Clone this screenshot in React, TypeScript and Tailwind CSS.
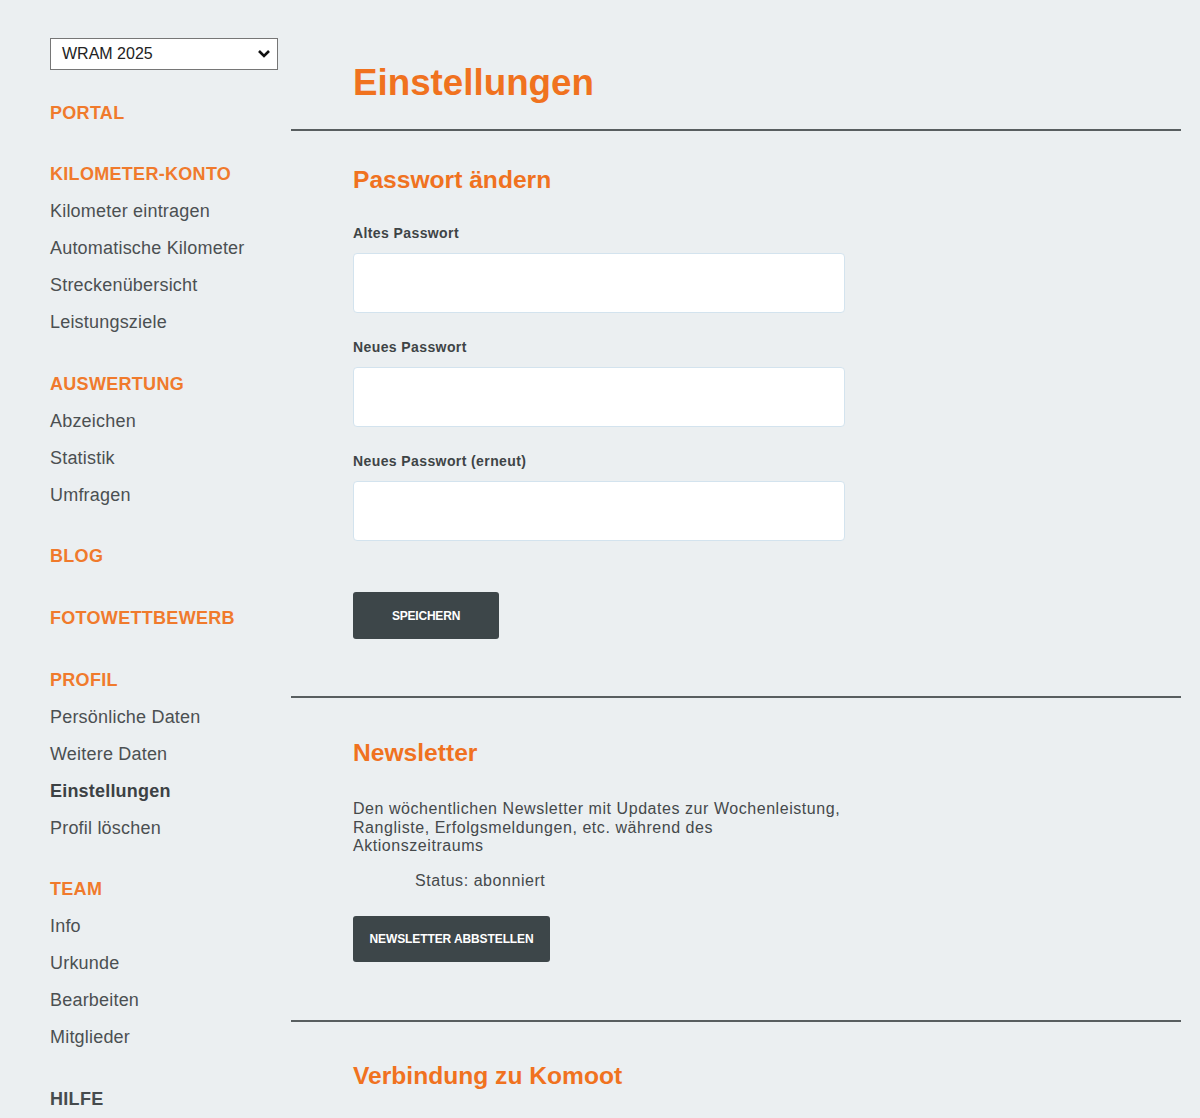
import React from "react";

const font = { fontFamily: '"Liberation Sans", Arial, sans-serif' };

const groups: { title: string; items: string[]; dark?: boolean }[] = [
  { title: "PORTAL", items: [] },
  {
    title: "KILOMETER-KONTO",
    items: ["Kilometer eintragen", "Automatische Kilometer", "Streckenübersicht", "Leistungsziele"],
  },
  { title: "AUSWERTUNG", items: ["Abzeichen", "Statistik", "Umfragen"] },
  { title: "BLOG", items: [] },
  { title: "FOTOWETTBEWERB", items: [] },
  { title: "PROFIL", items: ["Persönliche Daten", "Weitere Daten", "Einstellungen", "Profil löschen"] },
  { title: "TEAM", items: ["Info", "Urkunde", "Bearbeiten", "Mitglieder"] },
  { title: "HILFE", items: [], dark: true },
];

const Sidebar: React.FC = () => (
  <aside className="w-[291px] shrink-0 pl-[50px] pt-[38px]">
    <div className="mb-[3px] flex h-[32px] w-[228px] items-center justify-between border border-[#767676] bg-white pl-[11px] pr-[6px] text-[16px] text-[#222]">
      <span>WRAM 2025</span>
      <svg width="14" height="10" viewBox="0 0 14 10">
        <polyline points="2,2 7,7 12,2" fill="none" stroke="#111" strokeWidth="2.6" />
      </svg>
    </div>
    {groups.map((g) => (
      <div key={g.title} className="mt-[24.6px]">
        <div
          className={`text-[18px] font-bold leading-[37px] tracking-[0.3px] ${
            g.dark ? "text-[#464b4d]" : "text-[#f07a2c]"
          }`}
        >
          {g.title}
        </div>
        {g.items.map((item) => (
          <div
            key={item}
            className={`text-[18px] leading-[37px] tracking-[0.2px] ${
              item === "Einstellungen" ? "font-bold text-[#3c4144]" : "text-[#4b5052]"
            }`}
          >
            {item}
          </div>
        ))}
      </div>
    ))}
  </aside>
);

const Field: React.FC<{ label: string; first?: boolean }> = ({ label, first }) => (
  <div className={first ? "mt-[27px]" : "mt-[24px]"}>
    <div className="text-[14px] font-bold leading-[20px] tracking-[0.4px] text-[#3e4446]">{label}</div>
    <div className="mt-[10px] h-[60px] w-[492px] rounded-[4px] border border-[#d3e3ee] bg-white" />
  </div>
);

const Divider: React.FC = () => <div className="h-[2px] bg-[#585e60]" />;

const App: React.FC = () => {
  return (
    <div className="flex min-h-[1118px] bg-[#ebeff1]" style={font}>
      <Sidebar />
      <main className="flex-1 pr-[19px] pt-[61px]">
        <h1 className="pl-[62px] text-[36.75px] font-bold leading-[44px] text-[#f0721f]">Einstellungen</h1>
        <div className="mt-[24px]">
          <Divider />
        </div>

        <section className="pl-[62px] pt-[33px] pb-[57px]">
          <h2 className="text-[24.6px] font-bold leading-[32px] text-[#f0721f]">Passwort ändern</h2>
          <Field label="Altes Passwort" first />
          <Field label="Neues Passwort" />
          <Field label="Neues Passwort (erneut)" />
          <button className="mt-[51px] h-[47px] w-[146px] rounded-[3px] bg-[#3d4649] text-[12px] font-bold tracking-[-0.2px] text-white">
            SPEICHERN
          </button>
        </section>
        <Divider />

        <section className="pl-[62px] pt-[39px] pb-[58px]">
          <h2 className="text-[24.6px] font-bold leading-[32px] text-[#f0721f]">Newsletter</h2>
          <p className="mt-[31px] w-[492px] text-[16px] leading-[18.5px] tracking-[0.55px] text-[#45494b]">
            Den wöchentlichen Newsletter mit Updates zur Wochenleistung, Rangliste, Erfolgsmeldungen, etc. während des
            Aktionszeitraums
          </p>
          <div className="mt-[16px] pl-[62px] text-[16px] leading-[18px] tracking-[0.55px] text-[#45494b]">
            Status: abonniert
          </div>
          <button className="mt-[26px] h-[46px] w-[197px] rounded-[3px] bg-[#3d4649] text-[12px] font-bold tracking-[-0.1px] text-white">
            NEWSLETTER ABBSTELLEN
          </button>
        </section>
        <Divider />

        <section className="pl-[62px] pt-[38px]">
          <h2 className="text-[24.6px] font-bold leading-[32px] text-[#f0721f]">Verbindung zu Komoot</h2>
        </section>
      </main>
    </div>
  );
};

export default App;
